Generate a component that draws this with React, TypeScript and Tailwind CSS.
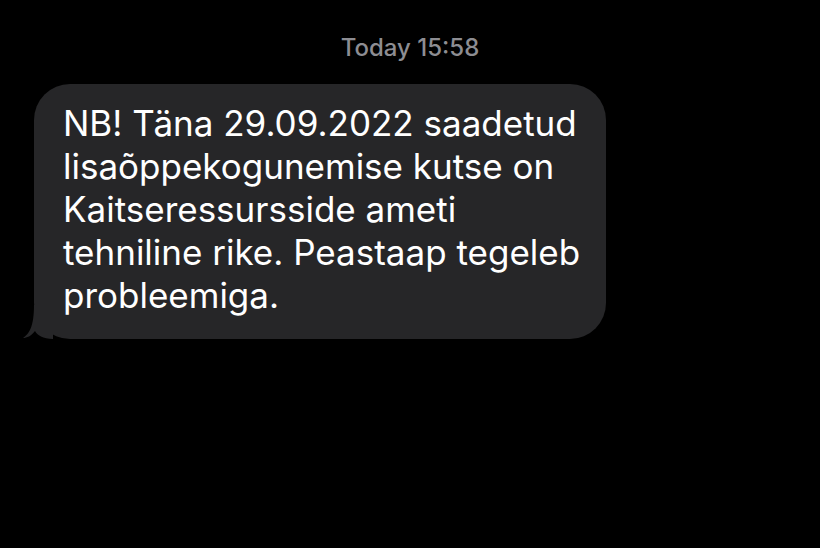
export default function App() {
  return (
    <div className="w-[820px] h-[548px] bg-black overflow-hidden font-['Inter',sans-serif]">
      <p className="pt-[34px] text-center text-[24px] leading-[28px] font-medium text-[#8d8d92]">
        Today 15:58
      </p>
      <div className="mt-[22px] ml-[34px] relative w-[572px]">
        <div className="bg-[#262628] rounded-[36px] pl-[29px] pr-[10px] pt-[18px] pb-[22px]">
          <p className="text-white text-[35px] leading-[43px] whitespace-nowrap">
            NB! Täna 29.09.2022 saadetud<br />
            lisaõppekogunemise kutse on<br />
            Kaitseressursside ameti<br />
            tehniline rike. Peastaap tegeleb<br />
            probleemiga.
          </p>
        </div>
        <svg className="absolute left-[-11px] bottom-0" width="34" height="34" viewBox="0 0 34 34">
          <path d="M11 0 L30 0 L30 34 C 20 34 14 30 12 26 C 8 31 4 33 0 33 C 6 29 11 22 11 0 Z" fill="#262628" />
        </svg>
      </div>
    </div>
  );
}
